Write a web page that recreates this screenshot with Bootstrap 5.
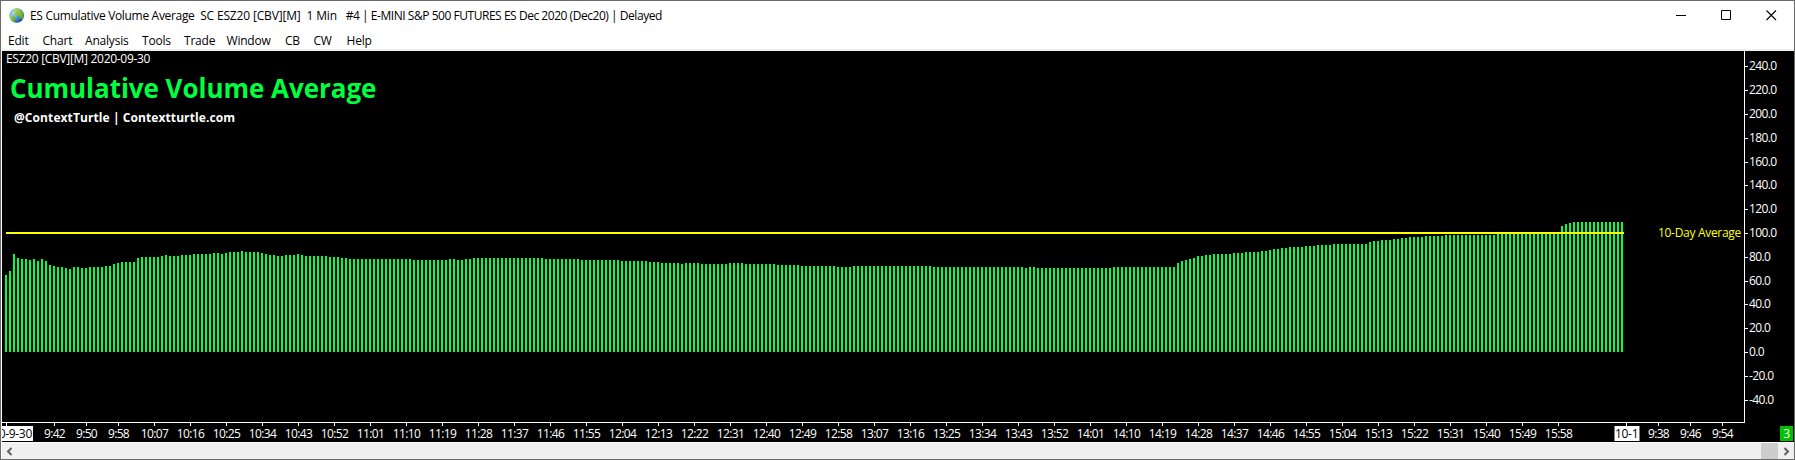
<!DOCTYPE html>
<html lang="en">
<head>
<meta charset="utf-8">
<title>ES Cumulative Volume Average</title>
<link href="https://cdn.jsdelivr.net/npm/bootstrap@5.3.0/dist/css/bootstrap.min.css" rel="stylesheet">
<style>
  body { font: 12px/16px "Open Sans", "Noto Sans", sans-serif; letter-spacing: -.35px; color: #000; }
  .app-window { height: 460px; border: 1px solid #6b6b6b; padding-left: 1px; }
  .title-bar { height: 31px; padding: 0 17px 2px 6px; }
  .title-bar .caption { padding-left: 6px; white-space: pre; letter-spacing: -.46px; }
  .caption .study-name { letter-spacing: -.32px; }
  .caption .symbol-name { letter-spacing: -.16px; }
  .window-buttons { gap: 35px; }
  .menu-bar { height: 19px; padding: 1px 0 0 6px; border-bottom: 2px solid #f0f0f0;
    display: grid; grid-template-columns: 34.5px 42.5px 57px 42px 42.5px 58.5px 28.5px 33px auto; align-items: center; letter-spacing: -.2px; }
  .chart-area { height: 391px; background: #000; color: #fff; display: grid;
    grid-template: 372px 19px / 1743px 49px; }
  .plot { border-right: 1px solid #fff; border-bottom: 1px solid #fff; }
  .symbol-line { padding: 0 0 0 4px; letter-spacing: -.3px; }
  .study-title { font-size: 26px; line-height: 32px; font-weight: 700; color: #00ff40; padding-left: 8px; margin-top: 5px; letter-spacing: -.04px; }
  .study-credit { font-weight: 700; padding-left: 12px; margin-top: 6px; letter-spacing: .09px; }
  .volume-bars { left: 3px; bottom: 70px; gap: 2px; }
  .volume-bars i { width: 2px; background: #00ff40; }
  .average-line { left: 4px; top: 181px; width: 1618px; height: 2px; background: #ff0; }
  .average-label { right: 3px; top: 174px; color: #ff0; letter-spacing: -.3px; }
  .y-label { left: 0; line-height: 16px; padding-left: 4px; margin-top: -8px; letter-spacing: -.62px; }
  .y-label::before { content: ""; position: absolute; left: 0; top: 8px; width: 3px; height: 1px; background: #fff; }
  .x-label { top: 3px; transform: translateX(-50%); line-height: 15px; height: 15px; letter-spacing: -.65px; white-space: nowrap; }
  .x-tick { top: 0; width: 1px; height: 3px; background: #fff; }
  .x-label.day { background: #fff; color: #000; padding: 0 1px; width: 25px; text-align: center; letter-spacing: -.3px; }
  .x-label.first-day { left: 0; width: 31px; transform: none; display: flex; justify-content: flex-end; overflow: hidden; padding-right: 1px; }
  .chart-number { right: 1px; top: 3px; width: 13px; height: 15px; line-height: 15px; background: #00c000; text-align: center; }
  .scroll-strip { height: 17px; background: #f0f0f0; border-top: 1px solid #fff; padding: 0 4px; }
  .scroll-thumb { width: 17px; height: 16px; background: #cdcdcd; margin-right: 5px; }
</style>
</head>
<body class="m-0 overflow-hidden">
<div class="app-window bg-white overflow-hidden">
  <header class="title-bar d-flex align-items-center">
    <svg width="16" height="16" viewBox="0 0 16 16">
      <defs>
        <radialGradient id="sea" cx=".3" cy=".3" r=".8"><stop offset="0" stop-color="#b9def2"/><stop offset=".5" stop-color="#4a9fd8"/><stop offset="1" stop-color="#12498c"/></radialGradient>
        <linearGradient id="land" x2="1" y2="1"><stop offset="0" stop-color="#c4dc5c"/><stop offset="1" stop-color="#4f9a24"/></linearGradient>
      </defs>
      <circle cx="8.7" cy="7.5" r="7.3" fill="url(#sea)"/>
      <path d="M6 1.200C9 .1 12.500 1 14.500 4c1.500 2.500 1.400 5 .1 7-1.200.4-1.900-.9-2.600-2.300-.8-1-2.500-.5-3.700-1.100C6.800 6.700 5.300 3.500 6 1.200Z" fill="url(#land)"/>
      <path d="M2 5.200C3.200 5.800 3.600 7.500 5 8.400c2 .9 3.500 1.600 2.900 3.200-.5 1-1.400 1.500-1.500 2.700C3.300 13 1.500 9.800 2 5.200Z" fill="url(#land)"/>
    </svg>
    <div class="caption"><span class="study-name">ES Cumulative Volume Average  </span><span class="symbol-name">SC ESZ20 [CBV][M]  1 Min   </span>#4 | E-MINI S&amp;P 500 FUTURES ES Dec 2020 (Dec20) | Delayed</div>
    <div class="window-buttons d-flex ms-auto" aria-label="Window controls">
      <svg width="10" height="11"><path d="M0 5.500h10" stroke="#000"/></svg>
      <svg width="10" height="11"><path d="M.5.500h9v9h-9z" fill="none" stroke="#000"/></svg>
      <svg width="11" height="11"><path d="M.5.500l9.500 9.500M10 .5.500 10" stroke="#000" stroke-width="1.100"/></svg>
    </div>
  </header>
  <nav class="menu-bar"><span>Edit</span><span>Chart</span><span>Analysis</span><span>Tools</span><span>Trade</span><span>Window</span><span>CB</span><span>CW</span><span>Help</span></nav>
  <main class="chart-area">
    <section class="plot position-relative">
      <div class="symbol-line">ESZ20 [CBV][M] 2020-09-30</div>
      <div class="study-title">Cumulative Volume Average</div>
      <div class="study-credit">@ContextTurtle | Contextturtle.com</div>
      <div class="volume-bars position-absolute d-flex align-items-end" id="bars"></div>
      <div class="average-line position-absolute"></div>
      <div class="average-label position-absolute">10-Day Average</div>
    </section>
    <aside class="position-relative" id="yAxis"></aside>
    <div class="position-relative" id="xAxis"></div>
    <div class="position-relative"><div class="chart-number position-absolute">3</div></div>
  </main>
  <footer class="scroll-strip d-flex align-items-center">
    <svg width="7" height="9"><path d="M5.500 1 2 4.500 5.500 8" fill="none" stroke="#606060" stroke-width="2"/></svg>
    <div class="scroll-thumb ms-auto"></div>
    <svg width="7" height="9"><path d="M1.500 1 5 4.500 1.500 8" fill="none" stroke="#606060" stroke-width="2"/></svg>
  </footer>
</div>
<script src="https://cdn.jsdelivr.net/npm/bootstrap@5.3.0/dist/js/bootstrap.bundle.min.js"></script>
<script>
  // One bar per minute, as [height, number of consecutive minutes].
  const runs = [[77,1],[81,1],[98,1],[94,1],[93,2],[92,1],[93,1],[91,1],[93,1],[91,1],[87,1],[86,1],[85,2],[84,1],[83,1],[85,2],[84,2],[85,4],[86,2],[88,1],[89,1],[90,4],[94,1],[95,5],[96,1],[97,1],[96,3],[97,3],[98,5],[99,2],[98,1],[99,1],[100,3],[101,1],[100,4],[99,1],[98,1],[97,2],[96,2],[97,3],[98,1],
    [97,1],[96,6],[95,3],[94,2],[93,16],[92,9],[93,2],[92,2],[93,2],[94,18],[93,9],[92,10],[91,7],[90,3],[89,5],[88,1],[89,4],
    [88,7],[89,4],[88,8],[87,6],[86,9],[85,4],[86,20],[85,23],[84,1],[85,2],[84,16],
    [84,3],[85,16],[89,1],[91,1],[92,1],[93,1],[94,1],[96,2],[97,2],[98,5],[99,3],[100,4],[101,2],[102,1],[103,2],[104,2],[105,4],[106,3],[107,4],[108,9],[110,1],[111,2],[112,3],[113,2],[114,2],[115,4],[116,5],[117,13],
    [119,16],[126,1],[128,1],[129,1],[130,13]];
  document.getElementById('bars').innerHTML = runs.map(([h, n]) => `<i style="height:${h}px"></i>`.repeat(n)).join('');

  let y = '';
  for (let v = 240; v >= -40; v -= 20) y += `<div class="y-label position-absolute" style="top:${Math.round(301 - v * 1.19)}px">${v.toFixed(1)}</div>`;
  document.getElementById('yAxis').innerHTML = y;

  const ticks = [['9:42', 52], ['9:50', 84]];
  for (let k = 0; k <= 40; k++) {
    const m = 598 + 9 * k;
    ticks.push([`${Math.floor(m / 60)}:${String(m % 60).padStart(2, '0')}`, 116 + 36 * k]);
  }
  ticks.push(['9:38', 1656], ['9:46', 1688], ['9:54', 1720]);
  const tick = x => `<div class="x-tick position-absolute" style="left:${x}px"></div>`;
  document.getElementById('xAxis').innerHTML =
    ticks.map(([t, x]) => tick(x) + `<div class="x-label position-absolute" style="left:${x + .5}px">${t}</div>`).join('') +
    tick(4) + '<div class="x-label day first-day position-absolute">0-9-30</div>' +
    tick(1624) + '<div class="x-label day position-absolute" style="left:1624.5px">10-1</div>';
</script>
</body>
</html>
